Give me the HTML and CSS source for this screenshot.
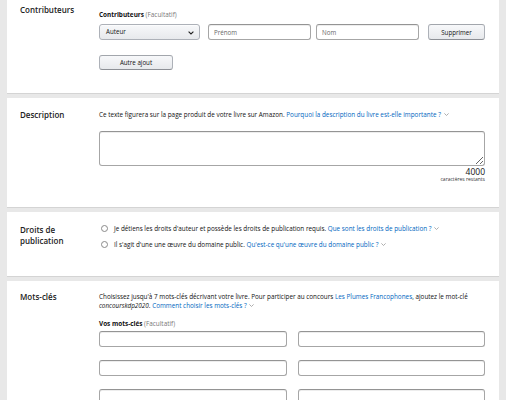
FILE: index.html
```html
<!DOCTYPE html>
<html lang="fr">
<head>
<meta charset="utf-8">
<title>Détails du livre</title>
<link rel="stylesheet" href="styles.css">
</head>
<body>
<div class="page">
  <section class="card card-first">
    <h2 class="card-title">Contributeurs</h2>
    <div class="card-body body-first">
      <div class="field-label"><b>Contributeurs</b> <span class="muted">(Facultatif)</span></div>
      <div class="contrib-row">
        <div class="select">Auteur
          <svg class="select-caret" width="6" height="4" viewBox="0 0 6 4"><path d="M0.6 0.6 L3 3 L5.4 0.6" fill="none" stroke="#222" stroke-width="1.1"/></svg>
        </div>
        <input class="input" type="text" placeholder="Prénom">
        <input class="input" type="text" placeholder="Nom">
        <button class="btn btn-del" type="button">Supprimer</button>
      </div>
      <button class="btn btn-add" type="button">Autre ajout</button>
    </div>
  </section>

  <section class="card card-desc">
    <h2 class="card-title">Description</h2>
    <div class="card-body">
      <p class="text">Ce texte figurera sur la page produit de votre livre sur Amazon. <a class="link">Pourquoi la description du livre est-elle importante ?</a> <svg class="chev" width="5" height="3" viewBox="0 0 5 3"><path d="M0.4 0.4 L2.5 2.5 L4.6 0.4" fill="none" stroke="#999" stroke-width="0.8"/></svg></p>
      <textarea class="textarea"></textarea>
      <div class="counter">4000</div>
      <div class="counter-sub">caractères restants</div>
    </div>
  </section>

  <section class="card card-rights">
    <h2 class="card-title">Droits de<br>publication</h2>
    <div class="card-body">
      <label class="radio-row"><span class="radio"></span><span class="text">Je détiens les droits d'auteur et possède les droits de publication requis. <a class="link">Que sont les droits de publication ?</a> <svg class="chev" width="5" height="3" viewBox="0 0 5 3"><path d="M0.4 0.4 L2.5 2.5 L4.6 0.4" fill="none" stroke="#999" stroke-width="0.8"/></svg></span></label>
      <label class="radio-row"><span class="radio"></span><span class="text">Il s'agit d'une une œuvre du domaine public. <a class="link">Qu'est-ce qu'une œuvre du domaine public ?</a> <svg class="chev" width="5" height="3" viewBox="0 0 5 3"><path d="M0.4 0.4 L2.5 2.5 L4.6 0.4" fill="none" stroke="#999" stroke-width="0.8"/></svg></span></label>
    </div>
  </section>

  <section class="card card-keys">
    <h2 class="card-title">Mots-clés</h2>
    <div class="card-body">
      <p class="text para">Choisissez jusqu'à 7 mots-clés décrivant votre livre. Pour participer au concours <a class="link">Les Plumes Francophones</a>, ajoutez le mot-clé<br><i>concourskdp2020</i>. <a class="link">Comment choisir les mots-clés ?</a> <svg class="chev" width="5" height="3" viewBox="0 0 5 3"><path d="M0.4 0.4 L2.5 2.5 L4.6 0.4" fill="none" stroke="#999" stroke-width="0.8"/></svg></p>
      <div class="field-label"><b>Vos mots-clés</b> <span class="muted">(Facultatif)</span></div>
      <div class="keys-grid">
        <input class="input" type="text">
        <input class="input" type="text">
        <input class="input" type="text">
        <input class="input" type="text">
        <input class="input" type="text">
        <input class="input" type="text">
      </div>
    </div>
  </section>
</div>
</body>
</html>
```

FILE: styles.css
```css
* { box-sizing: border-box; }

html, body {
  margin: 0;
  padding: 0;
  background: #e8e8e8;
  overflow: hidden;
}

body {
  font-family: "Open Sans", "Noto Sans", Arial, sans-serif;
  color: #111;
  width: 506px;
  height: 400px;
}

.page {
  padding: 0 7px;
  display: flex;
  flex-direction: column;
  gap: 5px;
}

.card {
  background: #fff;
  display: grid;
  grid-template-columns: 79px 1fr;
  padding: 11px 14px 24px 13px;
  box-shadow: 0 1px 0 #d4d4d4;
}

.card-title {
  margin: 0;
  font-size: 8px;
  line-height: 10.5px;
  font-weight: 600;
  color: #222;
}

.card-body {
  min-width: 0;
}

.card-first {
  padding-top: 5px;
  padding-bottom: 23px;
}

.body-first {
  padding-top: 6px;
}

.field-label {
  font-size: 6.4px;
  line-height: 8px;
  color: #111;
}

.field-label b {
  font-weight: 700;
  color: #111;
}

.muted {
  color: #777;
}

.text {
  font-size: 6.35px;
  line-height: 9px;
  color: #111;
  margin: 0;
}

.link {
  color: #0066c0;
  cursor: pointer;
}

.chev {
  vertical-align: 1px;
  margin-left: 1px;
}

.contrib-row {
  margin-top: 5px;
  display: flex;
  align-items: center;
  gap: 8px;
}

.select {
  position: relative;
  width: 101px;
  height: 16px;
  border: 1px solid #adb1b8;
  border-radius: 3px;
  background: linear-gradient(#f7f8fa, #e7e9ec);
  font-size: 6.2px;
  line-height: 14px;
  padding-left: 6px;
  color: #111;
  box-shadow: 0 1px 0 rgba(255,255,255,.6) inset;
}

.select-caret {
  position: absolute;
  right: 5px;
  top: 6px;
}

.input {
  display: block;
  height: 16px;
  border: 1px solid #a6a6a6;
  border-top-color: #949494;
  border-radius: 3px;
  background: #fff;
  box-shadow: 0 1px 0 rgba(255,255,255,.5), 0 1px 0 rgba(0,0,0,.07) inset;
  font-family: inherit;
  font-size: 6.2px;
  padding: 0 5px;
  margin: 0;
  outline: none;
}

.input::placeholder {
  color: #666;
}

.contrib-row .input {
  width: 103px;
}

.contrib-row .input + .input {
  margin-left: -3px;
}

.btn {
  display: block;
  height: 16px;
  border: 1px solid #adb1b8;
  border-top-color: #a2a6ac;
  border-bottom-color: #8d9096;
  border-radius: 3px;
  background: linear-gradient(#f7f8fa, #e7e9ec);
  font-family: inherit;
  font-size: 6.2px;
  color: #111;
  padding: 0;
  margin: 0;
}

.btn-del {
  width: 57px;
  margin-left: 1px;
}

.btn-add {
  width: 74px;
  height: 15px;
  margin-top: 15px;
}

.card-desc {
  padding-top: 12px;
}

.textarea {
  display: block;
  width: 100%;
  height: 35px;
  margin: 12px 0 0;
  border: 1px solid #a6a6a6;
  border-top-color: #949494;
  border-radius: 3px;
  box-shadow: 0 1px 0 rgba(0,0,0,.07) inset;
  resize: vertical;
  outline: none;
}

.counter {
  text-align: right;
  font-size: 8.5px;
  line-height: 9px;
  font-weight: 400;
  color: #111;
  margin-top: 1px;
}

.counter-sub {
  text-align: right;
  font-size: 5px;
  line-height: 7px;
  color: #333;
}

.card-rights {
  padding-top: 13px;
  padding-bottom: 24px;
}

.radio-row {
  display: flex;
  align-items: center;
  gap: 6px;
  height: 16px;
  margin-top: -5px;
}

.radio-row + .radio-row {
  margin-top: 0;
}

.radio {
  flex: none;
  width: 7px;
  height: 7px;
  border: 1px solid #8a8a8a;
  border-radius: 50%;
  background: #fff;
  margin-left: 2px;
}

.card-keys {
  padding-top: 11px;
}

.para {
  margin-bottom: 10px;
}

.card-keys .field-label {
  margin-bottom: 3px;
}

.keys-grid {
  display: grid;
  grid-template-columns: 1fr 1fr;
  column-gap: 11px;
  row-gap: 13px;
}

.keys-grid .input {
  width: 100%;
}
```
